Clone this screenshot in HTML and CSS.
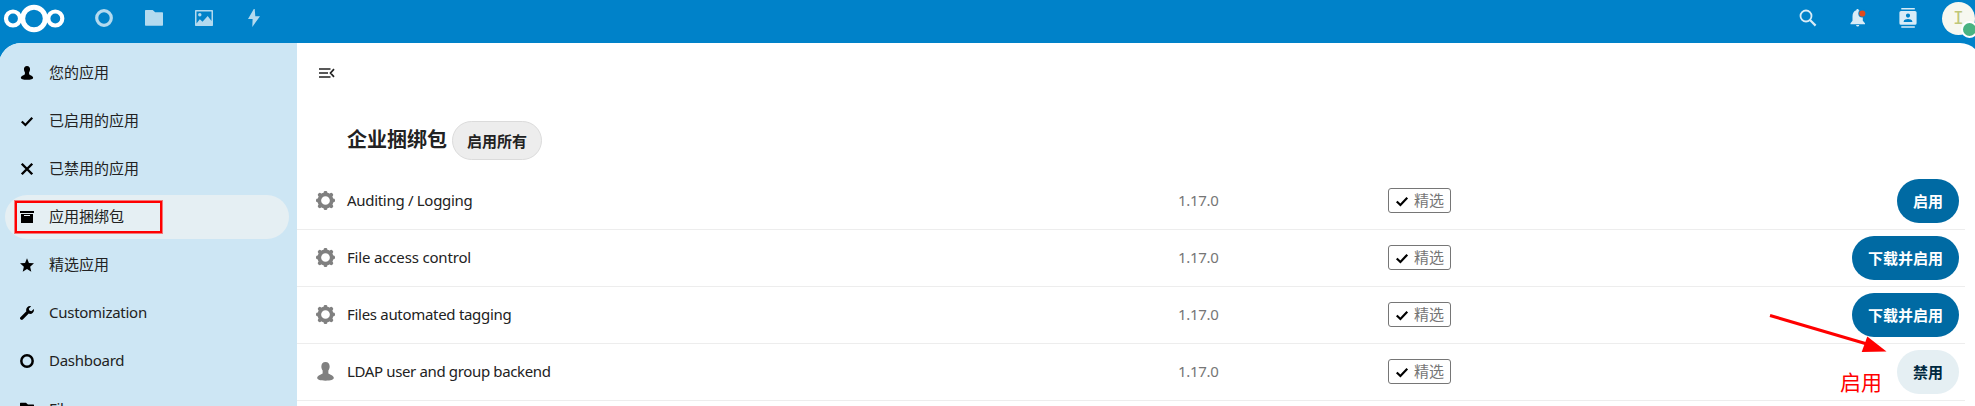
FILE: index.html
```html
<!DOCTYPE html>
<html lang="zh-CN">
<head>
<meta charset="utf-8">
<title>应用捆绑包</title>
<link rel="stylesheet" href="styles.css">
</head>
<body>
<svg class="defs" aria-hidden="true">
  <symbol id="user" viewBox="0 0 16 16"><path d="M8 0C5.700 0 4.500 1.600 4.500 3.800c0 1.400.5 2.500 1.100 3.300v2.300C5.300 10.400 1 11 1 13.300c0 1.700 2.500 2.400 7 2.400s7-.7 7-2.400c0-2.300-4.300-2.900-4.600-3.900V7.100c.6-.8 1.100-1.900 1.100-3.300C11.500 1.600 10.300 0 8 0z"/></symbol>
  <symbol id="check" viewBox="0 0 16 16"><path d="M2 8.500l4.200 4L14 4.200" fill="none" stroke="currentColor" stroke-width="2.500"/></symbol>
  <symbol id="close" viewBox="0 0 16 16"><path d="M2 2l12 12M14 2l-12 12" fill="none" stroke="currentColor" stroke-width="2.800"/></symbol>
  <symbol id="bundle" viewBox="0 0 14 14"><path d="M0 1h14v2H0zM1 4h12v9H1zM4 5v1h6V5z" fill-rule="evenodd"/></symbol>
  <symbol id="star" viewBox="0 0 16 16"><path d="M8 .3l2.200 5.300 5.800.5-4.400 3.900 1.300 5.700L8 12.700 3.100 15.700 4.400 10 0 6.100l5.800-.5z"/></symbol>
  <symbol id="wrench" viewBox="0 0 16 16"><path d="M11.500 0C9 0 7 2 7 4.500c0 .6.100 1 .3 1.500L.5 12.800c-.8.8-.6 1.600 0 2.200l.5.500c.6.600 1.500.6 2.200 0L10 8.700c.5.200 1 .3 1.500.3C14 9 16 7 16 4.500l-.2-1.200L13 6l-2.200-.8L10 3l2.700-2.800z"/></symbol>
  <symbol id="ring" viewBox="0 0 18 18"><circle cx="9" cy="9" r="7.300" fill="none" stroke="currentColor" stroke-width="3.200"/></symbol>
  <symbol id="folder" viewBox="0 0 18 16"><path d="M.7 0h7l2.500 2.300h7.100q.7 0 .7.700v12q0 .7-.7.700H.7Q0 15.700 0 15V.7Q0 0 .7 0z"/></symbol>
  <symbol id="gear" viewBox="0 0 20 20"><g fill="none" stroke="currentColor"><circle cx="10" cy="10" r="6.500" stroke-width="3.800"/><path d="M10 1.900v.6M10 17.500v.6M1.900 10h.6M17.500 10h.6M4 4l.7.700M15.300 15.300l.7.700M16 4l-.7.700M4.700 15.300l-.7.700" stroke-width="4" stroke-linecap="round"/></g></symbol>
</svg>

<header class="header">
  <svg class="logo" viewBox="0 0 62 30"><g fill="none" stroke="#fff"><circle cx="30" cy="14.500" r="11.300" stroke-width="5"/><circle cx="9" cy="14.500" r="7" stroke-width="4.200"/><circle cx="51.300" cy="14.500" r="7" stroke-width="4.200"/></g></svg>
  <nav class="apps">
    <svg class="app" width="18" height="18"><use href="#ring"/></svg>
    <svg class="app" width="18" height="16"><use href="#folder"/></svg>
    <svg class="app" width="18" height="16" viewBox="0 0 18 16"><path fill-rule="evenodd" d="M.7 0h16.600q.7 0 .7.700v14.600q0 .7-.7.700H.7Q0 16 0 15.300V.7Q0 0 .7 0zM1.500 1.500v12l3.300-4.300 2.700 2.500L12.700 6l3.800 5V1.500z"/><circle cx="4.800" cy="4.800" r="1.700"/></svg>
    <svg class="app" width="18" height="18" viewBox="0 0 18 18"><path d="M8.800 0L3 10h4.600L7.300 18 15 7.200h-4.700L9.700 0z"/></svg>
  </nav>
  <div class="tools">
    <svg width="18" height="18" viewBox="0 0 18 18"><g fill="none" stroke="currentColor"><circle cx="7" cy="7" r="5.500" stroke-width="1.800"/><path d="M11 11l5.600 5.600" stroke-width="2.200"/></g></svg>
    <svg width="18" height="18" viewBox="0 0 18 18"><path d="M8.500 0c.9 0 1.200.6 1.200 1.300 2.800.7 4.100 3.200 4.100 6.200v4.300l2.200 2.400v1H1.500v-1l2-2.400V7.500c0-3 1.300-5.500 3.800-6.200C7.300.6 7.700 0 8.500 0zM7 16h3.300q-.3 1.500-1.600 1.500T7 16z"/><circle cx="13.300" cy="4.500" r="4" fill="#0082c9"/><circle cx="13.300" cy="4.500" r="3.100" fill="#e14a1c"/></svg>
    <svg width="18" height="20" viewBox="0 0 18 20"><path fill-rule="evenodd" d="M2.300 0h13.500v1.500H2.300zM2.300 18.300h13.500v1.500H2.300zM2 3h14q1.600 0 1.600 1.600v10.600q0 1.600-1.600 1.600H2q-1.600 0-1.600-1.600V4.600Q.4 3 2 3zM9 5.500a2.100 2.100 0 100 4.200 2.100 2.100 0 000-4.200zM4.700 14h8.600v-.8c0-1.500-2.700-2.300-4.300-2.300s-4.300.8-4.300 2.300z"/></svg>
    <div class="avatar">I<span class="status"></span></div>
  </div>
</header>

<div class="content">
  <nav class="sidebar">
    <a class="item"><svg><use href="#user"/></svg><span class="label">您的应用</span></a>
    <a class="item"><svg><use href="#check"/></svg><span class="label">已启用的应用</span></a>
    <a class="item"><svg><use href="#close"/></svg><span class="label">已禁用的应用</span></a>
    <a class="item selected"><svg><use href="#bundle"/></svg><span class="label">应用捆绑包</span><span class="highlight"></span></a>
    <a class="item"><svg><use href="#star"/></svg><span class="label">精选应用</span></a>
    <a class="item"><svg><use href="#wrench"/></svg><span class="label latin">Customization</span></a>
    <a class="item"><svg><use href="#ring"/></svg><span class="label latin">Dashboard</span></a>
    <a class="item"><svg><use href="#folder"/></svg><span class="label latin">Files</span></a>
  </nav>
  <main class="main">
    <svg class="toggle" viewBox="0 0 16 10"><path d="M0 1h11.500M0 5h9M0 9h11.500M15 1.200L11.500 5 15 8.800" fill="none" stroke="currentColor" stroke-width="1.700"/></svg>
    <div class="bundle-head"><h2>企业捆绑包</h2><button class="all">启用所有</button></div>
    <div class="list">
      <div class="row"><svg class="kind"><use href="#gear"/></svg><span class="name">Auditing / Logging</span><span class="version">1.17.0</span><span class="level"><span class="tag"><svg><use href="#check"/></svg><span class="label">精选</span></span></span><button class="primary">启用</button></div>
      <div class="row"><svg class="kind"><use href="#gear"/></svg><span class="name wide">File access control</span><span class="version">1.17.0</span><span class="level"><span class="tag"><svg><use href="#check"/></svg><span class="label">精选</span></span></span><button class="primary">下载并启用</button></div>
      <div class="row"><svg class="kind"><use href="#gear"/></svg><span class="name">Files automated tagging</span><span class="version">1.17.0</span><span class="level"><span class="tag"><svg><use href="#check"/></svg><span class="label">精选</span></span></span><button class="primary">下载并启用</button></div>
      <div class="row"><svg class="kind"><use href="#user"/></svg><span class="name narrow">LDAP user and group backend</span><span class="version">1.17.0</span><span class="level"><span class="tag"><svg><use href="#check"/></svg><span class="label">精选</span></span></span><button>禁用</button></div>
    </div>
  </main>
</div>
<svg class="arrow" viewBox="0 0 120 40"><path d="M1 4.500L98 33" stroke="red" stroke-width="3"/><path d="M98.300 25.500L117.500 40.500 92.700 41z" fill="red"/></svg>
<span class="note">启用</span>
</body>
</html>
```
FILE: styles.css
```css
* { box-sizing: border-box; }
body {
  margin: 0;
  height: 406px;
  overflow: hidden;
  position: relative;
  background: #0082c9;
  color: #222;
  font: 15px/24px "Noto Sans", "Noto Sans CJK SC", sans-serif;
}
svg { display: block; flex: none; fill: currentColor; overflow: visible; }
.defs { position: absolute; width: 0; height: 0; }

.header { height: 43px; display: flex; padding-left: 4px; }
.logo { width: 62px; height: 30px; margin: 4px 29px 0 0; }
.apps { display: flex; align-items: center; gap: 32px; height: 36px; color: #b3daef; }
.tools { display: flex; align-items: center; height: 36px; margin-left: auto; gap: 32px; color: #d9ecf7; }
.avatar {
  position: relative;
  width: 33px; height: 33px;
  margin: 0 0 0 -7px;
  border-radius: 50%;
  background: #f7f8f0;
  color: #bfc77a;
  font: 18px/32px "DejaVu Sans Mono", monospace;
  text-align: center;
}
.status {
  position: absolute;
  left: 19px; top: 19px;
  width: 17px; height: 17px;
  border: 2px solid #fff;
  border-radius: 50%;
  background: #49b382;
}

.content {
  display: flex;
  height: 363px;
  margin: 0 -7px 0 -1px;
  border-radius: 22px 22px 0 0;
  overflow: hidden;
  background: #fff;
}
.sidebar {
  display: flex;
  flex-direction: column;
  gap: 4px;
  width: 298px;
  flex: none;
  padding: 8px 8px 0 6px;
  background: #cde6f4;
}
.item {
  position: relative;
  display: flex;
  flex: none;
  align-items: center;
  gap: 15px;
  height: 44px;
  padding-left: 15px;
  border-radius: 22px;
}
.item svg { width: 14px; height: 14px; color: #000; }
.label { padding-bottom: 2px; }
.latin { letter-spacing: -.27px; }
.selected { background: #e5eff3; }
.highlight {
  position: absolute;
  left: 10px; top: 6px;
  width: 147px; height: 32px;
  border: 2px solid red;
  box-shadow: 0 0 0 1px rgba(255, 0, 0, .5);
}

.main { flex: 1; padding: 25px 17px 0 0; }
.toggle { width: 16px; height: 10px; margin-left: 22px; }
.bundle-head { display: flex; align-items: flex-start; gap: 5px; margin-top: 43px; padding-left: 50px; height: 52px; }
h2 { margin: 0; font-size: 20px; line-height: 37px; font-weight: 700; }
button {
  height: 44px;
  padding: 0 16px;
  border: 0;
  border-radius: 22px;
  background: #e5eff3;
  color: #00293f;
  font: 700 15px/24px "Noto Sans", "Noto Sans CJK SC", sans-serif;
}
.all { height: 39px; padding: 0 14px; border: 1px solid #dbdbdb; background: #ededed; color: #222; }
.primary { background: #006aa3; color: #fff; }

.row {
  display: grid;
  grid-template-columns: 31px 831px 210px 1fr auto;
  align-items: center;
  height: 57px;
  padding: 0 6px 0 19px;
  border-bottom: 1px solid #ededed;
}
.kind { width: 19px; height: 19px; color: #808080; margin-bottom: 1px; }
.name, .version { padding-bottom: 2px; letter-spacing: -.3px; }
.wide { letter-spacing: -.17px; }
.narrow { letter-spacing: -.36px; }
.version { color: #767676; }
.tag {
  display: inline-flex;
  align-items: center;
  gap: 5px;
  height: 25px;
  width: 63px;
  margin-bottom: 1px;
  padding-left: 6px;
  border: 1px solid #767676;
  border-radius: 3px;
  color: #767676;
}
.tag svg { width: 14px; height: 14px; color: #000; }
.level { display: flex; }

.arrow { position: absolute; left: 1769px; top: 311px; width: 120px; height: 40px; }
.note { position: absolute; left: 1840px; top: 366px; color: red; font: 400 21px/30px "Noto Sans CJK TC", sans-serif; }
```
